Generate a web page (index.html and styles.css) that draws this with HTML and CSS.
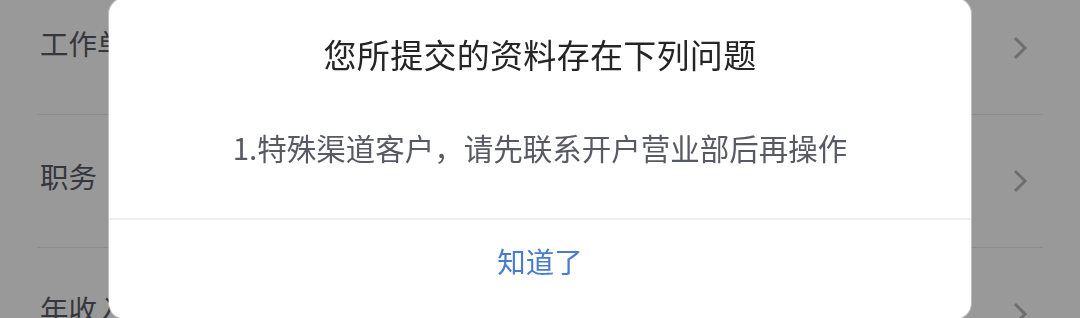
FILE: index.html
```html
<!DOCTYPE html>
<html lang="zh-CN">
<head>
    <meta charset="UTF-8">
    <meta name="viewport" content="width=device-width, initial-scale=1.0">
    <title>资料问题提示</title>
    <link rel="stylesheet" href="styles.css">
</head>
<body>
    <!-- Form list behind the dialog -->
    <div class="form-list">
        <div class="form-row">
            <span class="row-label">工作单位</span>
            <svg class="chevron" viewBox="0 0 16 26"><path d="M3 3 L13 13 L3 23"/></svg>
        </div>
        <div class="form-row">
            <span class="row-label">职务</span>
            <svg class="chevron" viewBox="0 0 16 26"><path d="M3 3 L13 13 L3 23"/></svg>
        </div>
        <div class="form-row">
            <span class="row-label">年收入</span>
            <svg class="chevron" viewBox="0 0 16 26"><path d="M3 3 L13 13 L3 23"/></svg>
        </div>
    </div>

    <div class="mask"></div>

    <!-- Alert dialog -->
    <div class="dialog">
        <h2 class="dialog-title">您所提交的资料存在下列问题</h2>
        <p class="dialog-msg">1.特殊渠道客户，请先联系开户营业部后再操作</p>
        <button class="dialog-btn">知道了</button>
    </div>
</body>
</html>
```

FILE: styles.css
```css
html {
    overflow: hidden;
}
body {
    margin: 0;
    width: 1080px;
    height: 318px;
    overflow: hidden;
    background-color: #fff;
    font-family: "Noto Sans CJK SC", "Noto Sans", sans-serif;
}
.form-list {
    margin-top: -18px;
    padding: 0 37px;
}
.form-row {
    display: flex;
    align-items: center;
    justify-content: space-between;
    height: 132px;
    border-bottom: 1px solid #e9e9e9;
    padding-left: 3px;
    padding-right: 15px;
}
.row-label {
    font-size: 28.5px;
    color: #5a5d66;
    margin-top: -12px;
}
.chevron {
    width: 16px;
    height: 26px;
    fill: none;
    stroke: #b8b8b8;
    stroke-width: 3;
}
.mask {
    position: fixed;
    inset: 0;
    background-color: rgba(0, 0, 0, 0.4);
}
.dialog {
    position: fixed;
    left: 109px;
    top: -2px;
    width: 862px;
    height: 321px;
    background-color: #fff;
    border-radius: 16px;
    box-shadow: 0 0 0 1px rgba(255, 255, 255, 0.35);
    display: flex;
    flex-direction: column;
    align-items: stretch;
}
.dialog-title {
    margin: 36px 0 0;
    font-size: 33px;
    font-weight: normal;
    letter-spacing: 0.3px;
    line-height: 40px;
    color: #252525;
    text-align: center;
}
.dialog-msg {
    margin: 53px 0 0;
    padding-bottom: 51px;
    font-size: 29.5px;
    line-height: 40px;
    color: #575a62;
    text-align: center;
    border-bottom: 2px solid #f0f0f0;
}
.dialog-btn {
    height: 84px;
    border: none;
    background: none;
    padding: 0 0 4px;
    font-family: inherit;
    font-size: 28.5px;
    color: #4a7bcf;
    cursor: pointer;
}
```
